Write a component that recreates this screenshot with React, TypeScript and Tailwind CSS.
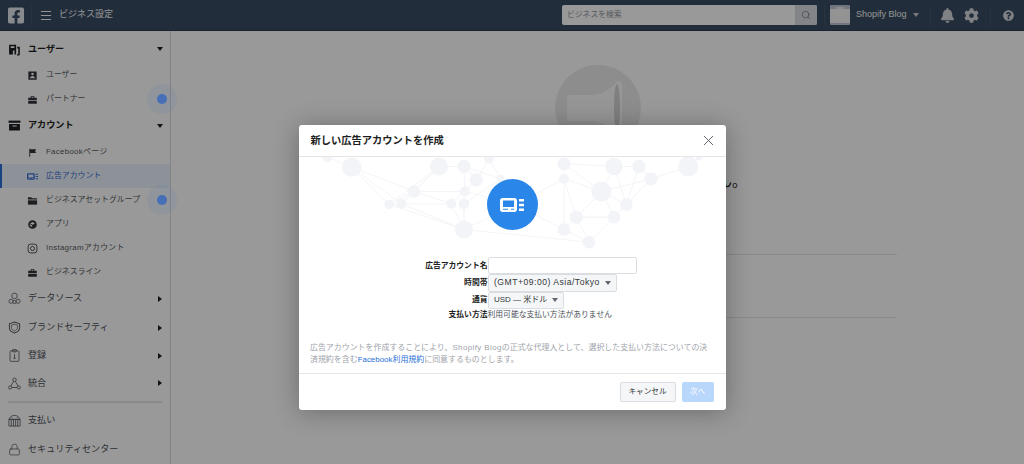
import React from "react";
import { Lock, Menu, Search, X } from "lucide-react";
import { FaBell, FaCog, FaFacebookSquare, FaQuestionCircle } from "react-icons/fa";

type IconProps = { className?: string };

const Svg = ({ className, children }: IconProps & { children: React.ReactNode }) => (
  <svg viewBox="0 0 12 12" className={className} fill="currentColor">
    {children}
  </svg>
);

const UsersBold = ({ className }: IconProps) => (
  <Svg className={className}>
    <path d="M1 1.500h6.500v9H6V7H4.500v3.500H1zM2.500 3v1.500h3.400V3z" fillRule="evenodd" />
    <path d="M8.500 3.500h2.400v7.200c0 .5-.4.8-.9.8H8.300v-1.200h1.200V5H8.500z" />
  </Svg>
);
const UserCard = ({ className }: IconProps) => (
  <Svg className={className}>
    <path fillRule="evenodd" d="M1.500 1.500h9v9h-9zM6 3a1.400 1.400 0 1 0 0 2.800A1.400 1.400 0 0 0 6 3zM3.300 9h5.400c0-1.500-1.200-2.500-2.700-2.500S3.300 7.500 3.300 9z" />
  </Svg>
);
const Briefcase = ({ className }: IconProps) => (
  <Svg className={className}>
    <path fillRule="evenodd" d="M4 2.500h4V4h2.700v6.500H1.300V4H4zM5 3.400V4h2v-.6zM1.300 6.500v.8h9.400v-.8z" />
  </Svg>
);
const ArchiveBox = ({ className }: IconProps) => (
  <Svg className={className}>
    <path d="M.5 1.500h11v2H.5z" />
    <path fillRule="evenodd" d="M1 4.500h10v6H1zM4 6v1h4V6z" />
  </Svg>
);
const Flag = ({ className }: IconProps) => (
  <Svg className={className}>
    <path d="M2.500 2h1v8.500h-1zM3.500 2.500h6.500L8.800 4.500 10 6.500H3.500z" />
  </Svg>
);
const AdIcon = ({ className }: IconProps) => (
  <svg viewBox="0 0 24 14" className={className} fill="currentColor">
    <path fillRule="evenodd" d="M2.500 0h12c1.400 0 2.500 1.100 2.500 2.500v9c0 1.400-1.100 2.500-2.500 2.500h-12C1.100 14 0 12.900 0 11.500v-9C0 1.100 1.100 0 2.500 0zM3 2.500v6.500h11V2.500zM3 10.800v1h5v-1zM11 10.800v1h3v-1z" />
    <path d="M19 1h5v2.400h-5zM19 5.800h5v2.400h-5zM19 10.600h5V13h-5z" />
  </svg>
);
const Folder = ({ className }: IconProps) => (
  <Svg className={className}>
    <path d="M1 2.500h3.500l1 1H11v1.500H1z" />
    <path d="M1 5.800h10v4.700H1z" />
  </Svg>
);
const AppBox = ({ className }: IconProps) => (
  <Svg className={className}>
    <path fillRule="evenodd" d="M6 1.300a4.700 4.700 0 1 1 0 9.400 4.700 4.700 0 0 1 0-9.400zM3.300 4.800 6 6.300l2.700-1.500L6 3.300zM5.600 7 3 5.600v1.700l2.600 1.400z" />
  </Svg>
);
const Insta = ({ className }: IconProps) => (
  <svg viewBox="0 0 12 12" className={className} fill="none" stroke="currentColor" strokeWidth="0.9">
    <rect x="1.200" y="1.200" width="9.600" height="9.600" rx="2.600" />
    <circle cx="6" cy="6" r="2.200" />
  </svg>
);
const DataSource = ({ className }: IconProps) => (
  <svg viewBox="0 0 14 14" className={className} fill="none" stroke="currentColor" strokeWidth="0.9">
    <circle cx="7" cy="4.200" r="3" />
    <circle cx="3.200" cy="10" r="2.200" />
    <circle cx="10.800" cy="10" r="2.200" />
    <circle cx="7" cy="10.800" r="1.800" />
  </svg>
);
const ShieldIcon = ({ className }: IconProps) => (
  <svg viewBox="0 0 14 14" className={className} fill="none" stroke="currentColor">
    <path strokeWidth="1.100" d="M7 1 12.500 3v4.200c0 2.800-2.400 4.800-5.500 5.800-3.100-1-5.500-3-5.500-5.800V3z" />
    <path strokeWidth="0.800" d="M7 3.400 10.300 4.600v2.600c0 1.600-1.400 2.800-3.300 3.500-1.900-.7-3.300-1.900-3.300-3.500V4.600z" />
  </svg>
);
const ClipboardIcon = ({ className }: IconProps) => (
  <svg viewBox="0 0 14 14" className={className} fill="none" stroke="currentColor" strokeWidth="0.9">
    <rect x="2.200" y="2" width="9.600" height="11.300" rx="1" />
    <rect x="4.800" y="0.700" width="4.400" height="2.400" rx="0.500" />
    <path d="M7 5.500v4.500M5.600 10h2.800" />
  </svg>
);
const Integration = ({ className }: IconProps) => (
  <svg viewBox="0 0 14 14" className={className} fill="none" stroke="currentColor" strokeWidth="0.9">
    <circle cx="7" cy="3" r="1.900" />
    <circle cx="2.300" cy="11.300" r="1.700" />
    <circle cx="11.700" cy="11.300" r="1.700" />
    <path d="M6 4.700 3.200 9.800M8 4.700l2.800 5.100M4 11.300h6" />
  </svg>
);
const Bank = ({ className }: IconProps) => (
  <svg viewBox="0 0 14 14" className={className} fill="none" stroke="currentColor" strokeWidth="0.9">
    <path d="M1 5.800C2 3 4.300 1.500 7 1.500s5 1.500 6 4.300z" />
    <path d="M1 5.800h12v7.200H1zM3.500 6v7M5.900 6v7M8.200 6v7M10.500 6v7M3.500 4.500l.8-1M10.500 4.500l-.8-1" />
  </svg>
);
const LockIcon = ({ className }: IconProps) => <Lock className={className} strokeWidth={1.4} />;

const CaretDown = () => <span className="ml-auto mr-[7px] h-0 w-0 border-x-[3.500px] border-t-[4px] border-x-transparent border-t-[#1c1e21]" />;
const CaretRight = () => <span className="ml-auto mr-[8px] h-0 w-0 border-y-[3.500px] border-l-[4px] border-y-transparent border-l-[#1c1e21]" />;

const Section = ({ icon: Icon, label, open, plain, h }: { icon: React.FC<IconProps>; label: string; open?: boolean; plain?: boolean; h: string }) => (
  <div className={`flex items-center pl-[8px] ${h}`}>
    <Icon className={`h-[13px] w-[13px] shrink-0 ${open ? "text-[#1c1e21]" : "text-[#5a5e64]"}`} />
    <span className={`ml-[7px] text-[9.100px] ${open ? "font-bold text-[#1c1e21]" : "text-[#4b4f56]"}`}>{label}</span>
    {!plain && (open ? <CaretDown /> : <CaretRight />)}
  </div>
);

const Sub = ({ icon: Icon, label, active, dot, spaced }: { icon: React.FC<IconProps>; label: string; active?: boolean; dot?: boolean; spaced?: boolean }) => (
  <div className={`relative flex h-[24.150px] items-center ${active ? "border-l-2 border-[#2a6fd6] bg-[#ecf3ff] pl-[25px] text-[#3b6fd0]" : "pl-[27px] text-[#565a60]"}`}>
    <Icon className={`h-[11px] w-[11px] shrink-0 ${active ? "text-[#3b6fd0]" : "text-[#303338]"}`} />
    <span className={`ml-[8px] text-[7.900px] ${spaced ? "tracking-[0.3px]" : ""}`}>{label}</span>
    {dot && (
      <span className="absolute left-[147px] top-[-3px] z-20 flex h-[30px] w-[30px] items-center justify-center rounded-full bg-[#4267b2]/10">
        <span className="h-[10px] w-[10px] rounded-full bg-[#466fb8]" />
      </span>
    )}
  </div>
);

const Sidebar = () => (
  <aside className="flex h-full w-[171px] shrink-0 flex-col border-r border-[#dadde1] bg-white pt-[4.500px]">
    <Section icon={UsersBold} label="ユーザー" open h="h-[28px]" />
    <Sub icon={UserCard} label="ユーザー" />
    <Sub icon={Briefcase} label="パートナー" dot />
    <Section icon={ArchiveBox} label="アカウント" open h="h-[29px]" />
    <Sub icon={Flag} label="Facebookページ" spaced />
    <Sub icon={AdIcon} label="広告アカウント" active />
    <Sub icon={Folder} label="ビジネスアセットグループ" dot />
    <Sub icon={AppBox} label="アプリ" />
    <Sub icon={Insta} label="Instagramアカウント" spaced />
    <Sub icon={Briefcase} label="ビジネスライン" />
    <Section icon={DataSource} label="データソース" h="h-[30px]" />
    <Section icon={ShieldIcon} label="ブランドセーフティ" h="h-[28px]" />
    <Section icon={ClipboardIcon} label="登録" h="h-[28px]" />
    <Section icon={Integration} label="統合" h="h-[28px]" />
    <div className="mx-[8px] mb-[3px] mt-[4px] h-[2px] bg-[#e4e6e9]" />
    <Section icon={Bank} label="支払い" plain h="h-[29px]" />
    <Section icon={LockIcon} label="セキュリティセンター" plain h="h-[29px]" />
  </aside>
);

const Header = () => (
  <header className="flex h-[31px] shrink-0 items-center border-b border-[#2b3a4d] bg-[#384b61] text-[#f5f6f7]">
    <FaFacebookSquare className="ml-[8px] h-[19px] w-[16px] text-[#e4e6eb]" />
    <div className="ml-[7px] h-[20px] w-px bg-[#43566c]" />
    <Menu className="ml-[7px] h-[15px] w-[14px]" strokeWidth={1.8} />
    <span className="ml-[6px] text-[9px]">ビジネス設定</span>
    <div className="ml-auto flex h-[20px] w-[255px] items-stretch overflow-hidden rounded-[2px] bg-white">
      <span className="flex-1 pl-[5px] text-[7.800px] leading-[20px] text-[#90949c]">ビジネスを検索</span>
      <span className="flex w-[22px] items-center justify-center bg-[#dadde1]">
        <Search className="h-[10px] w-[10px] text-[#606770]" strokeWidth={1.5} />
      </span>
    </div>
    <div className="ml-[7px] h-[20px] w-px bg-[#43566c]" />
    <div className="ml-[5px] flex h-[20px] w-[20px] flex-col overflow-hidden rounded-[2px] bg-[#f5f6f7]">
      <div className="flex h-[4px] justify-center bg-[#bec3d0]">
        <div className="mt-[2px] h-[2px] w-[8px] bg-[#e4e6eb]" />
      </div>
      <div className="flex-1" />
      <div className="h-[2px] bg-[#bec3d0]" />
    </div>
    <span className="ml-[6px] w-[51px] whitespace-nowrap text-[9px]">Shopify Blog</span>
    <span className="ml-[6px] h-0 w-0 border-x-[3.500px] border-t-[4px] border-x-transparent border-t-[#c8ccd2]" />
    <div className="ml-[11px] h-[20px] w-px bg-[#43566c]" />
    <FaBell className="ml-[10px] h-[15px] w-[13px] text-[#d4d8de]" />
    <FaCog className="ml-[10px] h-[15px] w-[15px] text-[#d4d8de]" />
    <div className="ml-[11px] h-[20px] w-px bg-[#43566c]" />
    <FaQuestionCircle className="ml-[12px] mr-[10px] h-[11px] w-[11px] text-[#d4d8de]" />
  </header>
);

const Main = () => (
  <main className="flex flex-1 flex-col items-center bg-white pt-[34px]">
    <svg viewBox="0 0 86 86" className="h-[86px] w-[86px]">
      <circle cx="43" cy="43" r="43" fill="#ebebeb" />
      <path d="M15 30h22c9 0 18-6 25-13 2-2 5-1 5 2v48c0 3-3 4-5 2-7-7-16-13-25-13H15c-2 0-3-1-3-3V33c0-2 1-3 3-3z" fill="#fbfbfb" />
      <ellipse cx="62" cy="43" rx="3" ry="24" fill="#d4d4d4" />
    </svg>
    <p className="mt-[22px] text-[15px] leading-[16px] text-[#1c1e21]">まだ広告アカウントが追加されていません。</p>
    <div className="mt-[65px] h-[64px] w-[598px] border-y border-[#e4e6e9]" />
  </main>
);

const nodes: [number, number, number][] = [
  [85, 110, 15], [158, 140, 29], [420, 138, 27], [495, 138, 20], [570, 115, 15], [532, 178, 20], [605, 175, 12],
  [345, 213, 19], [270, 252, 14], [307, 250, 15], [497, 213, 15], [457, 250, 15], [495, 250, 16], [495, 327, 27],
  [795, 130, 20], [795, 175, 15], [945, 138, 26], [1020, 138, 20], [1168, 138, 30], [1056, 175, 20], [907, 213, 30],
  [982, 252, 19], [945, 290, 19], [832, 290, 20], [795, 327, 19], [870, 365, 19], [1200, 110, 10], [650, 252, 14],
];
const edges: [number, number][] = [
  [0, 1], [1, 8], [1, 9], [1, 7], [2, 7], [2, 8], [2, 3], [3, 5], [3, 10], [4, 5], [4, 6], [5, 10], [5, 11], [6, 12],
  [7, 8], [7, 9], [7, 10], [7, 11], [8, 9], [8, 13], [9, 13], [10, 12], [10, 13], [11, 13], [12, 13], [9, 11], [2, 9],
  [13, 25], [13, 27], [14, 15], [15, 24], [15, 20], [14, 20], [16, 20], [16, 17], [17, 19], [18, 19], [18, 26], [19, 20],
  [19, 21], [20, 21], [20, 22], [20, 23], [21, 22], [22, 23], [23, 24], [23, 25], [24, 25], [22, 25], [16, 21], [17, 21],
  [15, 23], [27, 24], [6, 27], [10, 27], [3, 6], [15, 27], [23, 22], [14, 16],
];

const NetworkBg = () => (
  <svg viewBox="0 110 1284 290" className="pointer-events-none absolute left-0 top-0 h-[97px] w-[428px]">
    {edges.map(([a, b], i) => (
      <line key={i} x1={nodes[a][0]} y1={nodes[a][1]} x2={nodes[b][0]} y2={nodes[b][1]} stroke="#f4f5f9" strokeWidth="3" />
    ))}
    {nodes.map(([cx, cy, r], i) => (
      <circle key={i} cx={cx} cy={cy} r={r} fill="#f3f4f8" />
    ))}
  </svg>
);

const SelectBtn = ({ label, className }: { label: string; className: string }) => (
  <div className={`flex h-[17.500px] items-center justify-between whitespace-nowrap rounded-[2px] border border-[#dadde1] bg-[#f5f6f7] pl-[5.500px] pr-[5px] text-[#33363b] ${className}`}>
    {label}
    <span className="h-0 w-0 border-x-[3.500px] border-t-[4px] border-x-transparent border-t-[#606770]" />
  </div>
);

const Label = ({ children }: { children: React.ReactNode }) => (
  <span className="justify-self-end text-[7.800px] font-bold text-[#1c1e21]">{children}</span>
);

const Modal = () => (
  <div className="flex h-[285px] w-[427px] flex-col overflow-hidden rounded-[3px] bg-white shadow-[0_2px_26px_rgba(0,0,0,0.3)]">
    <div className="flex h-[32px] shrink-0 items-center justify-between border-b border-[#e5e5e5] pl-[12px] pr-[9px]">
      <span className="text-[10.250px] font-bold text-[#1c1e21]">新しい広告アカウントを作成</span>
      <X className="h-[17px] w-[17px] text-[#4b4f56]" strokeWidth={1.2} />
    </div>
    <div className="relative flex flex-1 flex-col">
      <NetworkBg />
      <div className="relative mt-[22px] flex h-[51px] w-[51px] items-center justify-center self-center rounded-full bg-[#2a86e8] text-white">
        <AdIcon className="h-[14px] w-[24px]" />
      </div>
      <div className="relative mt-[27px] grid grid-cols-[189px_1fr] items-center">
        <Label>広告アカウント名</Label>
        <div className="h-[17px] w-[149px] rounded-[2px] border border-[#dadde1] bg-white" />
        <Label>時間帯</Label>
        <SelectBtn label="(GMT+09:00) Asia/Tokyo" className="w-[129px] text-[8.600px] tracking-[0.5px]" />
        <Label>通貨</Label>
        <SelectBtn label="USD — 米ドル" className="w-[76px] text-[8px]" />
        <Label>支払い方法</Label>
        <span className="text-[7.800px] leading-[12px] text-[#4b4f56]">利用可能な支払い方法がありません</span>
      </div>
      <div className="mt-[21px] w-[404px] self-center whitespace-nowrap text-[7.950px] leading-[12px] text-[#a0a4ab]">
        <p>
          広告アカウントを作成することにより、<span className="tracking-[0.4px]">Shopify Blog</span>の正式な代理人として、選択した支払い方法についての決
        </p>
        <p>
          済規約を含む<span className="text-[#2a6fd6]">Facebook利用規約</span>に同意するものとします。
        </p>
      </div>
    </div>
    <div className="flex h-[37px] shrink-0 items-center justify-end gap-[6px] border-t border-[#e5e5e5] pr-[12px]">
      <div className="flex h-[20px] w-[56px] items-center justify-center rounded-[2px] border border-[#dadde1] bg-[#f5f6f7] text-[7.600px] text-[#33363b]">
        キャンセル
      </div>
      <div className="flex h-[20px] w-[32px] items-center justify-center rounded-[2px] bg-[#b9d6fb] text-[7.600px] text-white">次へ</div>
    </div>
  </div>
);

export default function App() {
  return (
    <div className="relative flex h-[464px] w-[1024px] flex-col overflow-hidden bg-white font-['Liberation_Sans','Noto_Sans_CJK_JP',sans-serif]">
      <Header />
      <div className="flex min-h-0 flex-1">
        <Sidebar />
        <Main />
      </div>
      <div className="absolute inset-0 z-10 flex justify-center bg-black/40 pt-[125px]">
        <Modal />
      </div>
    </div>
  );
}
